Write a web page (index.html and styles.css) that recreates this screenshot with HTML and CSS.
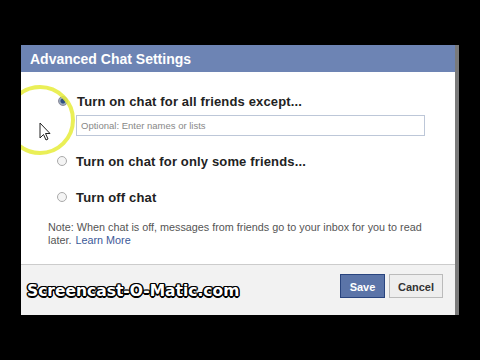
FILE: index.html
```html
<!DOCTYPE html>
<html>
<head>
<meta charset="utf-8">
<link rel="stylesheet" href="styles.css">
</head>
<body>
<div class="dialog">
  <div class="header">Advanced Chat Settings</div>
  <div class="body">
    <div class="option first">
      <span class="radio checked"></span>
      <span class="label">Turn on chat for all friends except...</span>
    </div>
    <div class="input">Optional: Enter names or lists</div>
    <div class="option second">
      <span class="radio"></span>
      <span class="label">Turn on chat for only some friends...</span>
    </div>
    <div class="option third">
      <span class="radio"></span>
      <span class="label">Turn off chat</span>
    </div>
    <div class="note">
      <div class="note-line">Note: When chat is off, messages from friends go to your inbox for you to read</div>
      <div class="note-line"><span>later.</span><span class="link">Learn More</span></div>
    </div>
  </div>
  <div class="footer">
    <span class="watermark">Screencast-O-Matic.com</span>
    <div class="buttons">
      <span class="btn save">Save</span>
      <span class="btn cancel">Cancel</span>
    </div>
  </div>
  <div class="highlight"></div>
  <svg class="cursor" width="12" height="19" viewBox="0 0 12 19"><path d="M1 1 L1 16 L4.5 12.5 L7 18 L9 17 L6.5 11.5 L11 11.5 Z" fill="#fff" stroke="#222" stroke-width="1"/></svg>
</div>
</body>
</html>
```
FILE: styles.css
```css
html, body { margin: 0; padding: 0; }
body {
  width: 480px; height: 360px; background: #000; overflow: hidden;
  font-family: "Liberation Sans", Arial, sans-serif;
}
.dialog {
  position: relative;
  margin: 45px 0 0 21px;
  width: 434px;
  height: 270px;
  border-right: 4px solid #7a7a7a;
  overflow: hidden;
  display: flex; flex-direction: column;
}
.header {
  height: 27px; background: #6d84b4; color: #fff;
  font-weight: bold; font-size: 14px; line-height: 29px;
  padding-left: 9px;
}
.body {
  background: #fff; height: 192px; padding: 0 0 0 27px; box-sizing: border-box;
  color: #333;
}
.option { display: flex; align-items: center; height: 16px; }
.option.first { margin-top: 21px; margin-left: 10px; }
.option.second { margin-top: 17px; margin-left: 9px; }
.option.third { margin-top: 20px; margin-left: 9px; }
.radio {
  width: 8px; height: 8px; border-radius: 50%; border: 1px solid #aaa;
  background: #f4f4f4; margin-right: 9px; flex: none;
}
.radio.checked { background: radial-gradient(circle, #2f4f82 0 2px, #9ab 3px); border-color: #889; }
.label { font-weight: bold; font-size: 13px; color: #222; letter-spacing: 0.15px; }
.input {
  margin: 6px 0 0 28px; width: 343px; height: 19px; border: 1px solid #bdc7d8;
  box-sizing: content-box; font-size: 9.5px; color: #888; line-height: 19px; padding-left: 4px;
}
.note {
  margin: 16px 0 0 0; font-size: 10.8px; line-height: 13px; color: #555;
}
.note-line { display: flex; gap: 4px; white-space: nowrap; }
.link { color: #3b5998; }
.footer {
  flex: 1; background: #f2f2f2; border-top: 1px solid #ccc;
  display: flex; align-items: flex-start; justify-content: space-between;
  padding: 9px 12px 0 6px;
}
.watermark {
  margin-top: 8px;
  font-weight: bold; font-size: 15.5px; color: #fff; letter-spacing: 0px;
  font-family: "DejaVu Sans", sans-serif;
  text-shadow: -1.5px 0 #000, 1.5px 0 #000, 0 -1.5px #000, 0 1.5px #000, -1px -1px #000, 1px 1px #000, -1px 1px #000, 1px -1px #000;
}
.buttons { display: flex; gap: 4px; }
.btn {
  display: block; height: 24px; line-height: 24px; box-sizing: border-box;
  font-weight: bold; font-size: 11px; text-align: center;
}
.save { width: 45px; background: #5b74a8; color: #fff; border: 1px solid #29447e; }
.cancel { width: 54px; background: #eee; color: #333; border: 1px solid #bbb; }
.highlight {
  position: absolute; left: -16px; top: 40px; width: 62px; height: 62px;
  border: 4px solid #e6ec3a; border-radius: 50%; opacity: 0.85;
}
.cursor { position: absolute; left: 18px; top: 77px; }
```
